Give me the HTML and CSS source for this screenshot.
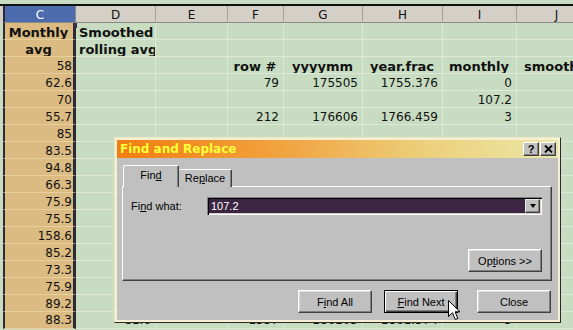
FILE: index.html
```html
<!DOCTYPE html>
<html lang="en">
<head>
<meta charset="UTF-8" />
<title>Find and Replace</title>
<link rel="stylesheet" href="styles.css">
</head>
<body>
<div class="sheet">
  <div class="top-strip"></div>

  <div class="row head">
    <span class="stub"></span><span class="c">C</span><span>D</span><span>E</span><span>F</span><span>G</span><span>H</span><span>I</span><span>J</span>
  </div>
  <div class="row">
    <span class="stub"></span><span class="c b">Monthly</span><span class="b l">Smoothed</span><span></span><span></span><span></span><span></span><span></span><span></span>
  </div>
  <div class="row">
    <span class="stub"></span><span class="c b">avg</span><span class="b l">rolling avg</span><span></span><span></span><span></span><span></span><span></span><span></span>
  </div>
  <div class="row">
    <span class="stub"></span><span class="c">58</span><span></span><span></span><span class="b">row #</span><span class="b">yyyymm</span><span class="b">year.frac</span><span class="b">monthly</span><span class="b l">smoothed</span>
  </div>
  <div class="row">
    <span class="stub"></span><span class="c">62.6</span><span></span><span></span><span>79</span><span>175505</span><span>1755.376</span><span>0</span><span></span>
  </div>
  <div class="row">
    <span class="stub"></span><span class="c">70</span><span></span><span></span><span></span><span></span><span></span><span>107.2</span><span></span>
  </div>
  <div class="row">
    <span class="stub"></span><span class="c">55.7</span><span></span><span></span><span>212</span><span>176606</span><span>1766.459</span><span>3</span><span></span>
  </div>
  <div class="row"><span class="stub"></span><span class="c">85</span><span></span><span></span><span></span><span></span><span></span><span></span><span></span></div>
  <div class="row"><span class="stub"></span><span class="c">83.5</span><span></span><span></span><span></span><span></span><span></span><span></span><span></span></div>
  <div class="row"><span class="stub"></span><span class="c">94.8</span><span></span><span></span><span></span><span></span><span></span><span></span><span></span></div>
  <div class="row"><span class="stub"></span><span class="c">66.3</span><span></span><span></span><span></span><span></span><span></span><span></span><span></span></div>
  <div class="row"><span class="stub"></span><span class="c">75.9</span><span></span><span></span><span></span><span></span><span></span><span></span><span></span></div>
  <div class="row"><span class="stub"></span><span class="c">75.5</span><span></span><span></span><span></span><span></span><span></span><span></span><span></span></div>
  <div class="row"><span class="stub"></span><span class="c">158.6</span><span></span><span></span><span></span><span></span><span></span><span></span><span></span></div>
  <div class="row"><span class="stub"></span><span class="c">85.2</span><span></span><span></span><span></span><span></span><span></span><span></span><span></span></div>
  <div class="row"><span class="stub"></span><span class="c">73.3</span><span></span><span></span><span></span><span></span><span></span><span></span><span></span></div>
  <div class="row"><span class="stub"></span><span class="c">75.9</span><span></span><span></span><span></span><span></span><span></span><span></span><span></span></div>
  <div class="row"><span class="stub"></span><span class="c">89.2</span><span></span><span></span><span></span><span></span><span></span><span></span><span></span></div>
  <div class="row low">
    <span class="stub"></span><span class="c">88.3</span><span>81.6</span><span></span><span>1357</span><span>186105</span><span>1861.374</span><span>5</span><span></span>
  </div>

  <div class="fill-handle"></div>

  <div class="dialog">
    <div class="titlebar">
      <span class="title">Find and Replace</span>
      <span class="tbtn q">?</span>
      <span class="tbtn"><svg width="9" height="8" viewBox="0 0 9 8"><path d="M1 0.5 L8 7.5 M8 0.5 L1 7.5" stroke="#000" stroke-width="1.8"/></svg></span>
    </div>

    <div class="tabs">
      <div class="tab active">Fin<u>d</u></div>
      <div class="tab">Re<u>p</u>lace</div>
    </div>

    <div class="panel">
      <div class="field">
        <label>Fi<u>n</u>d what:</label>
        <div class="combo"><span class="value">107.2</span><span class="drop"><i></i></span></div>
      </div>
      <div class="options">
        <button class="btn">Op<u>t</u>ions &gt;&gt;</button>
      </div>
    </div>

    <div class="actions">
      <button class="btn find-all">F<u>i</u>nd All</button>
      <button class="btn default"><u>F</u>ind Next</button>
      <button class="btn">Close</button>
    </div>
  </div>

  <svg class="cursor" width="13" height="21" viewBox="0 0 13 21">
    <path d="M0.5 0.5 L0.5 16.5 L4.5 12.8 L7.3 19.5 L9.8 18.4 L7.1 11.8 L12 11.8 Z" fill="#fff" stroke="#000" stroke-width="1"/>
  </svg>
</div>
</body>
</html>
```

FILE: styles.css
```css
:root {
  --green: #c7dcc1;
  --grid: #dce9d7;
  --tan: #dbbb82;
  --tan-grid: #e6cf9f;
  --sel: #2c2a36;
  --face: #c0c0c0;
  --shadow: #808080;
  --dark: #404040;
}
body {
  margin: 0;
  font-family: "DejaVu Sans", Verdana, sans-serif;
  background: var(--green);
}
.sheet {
  position: relative;
  width: 573px;
  height: 330px;
  overflow: hidden;
  background: var(--green);
}
.top-strip {
  height: 4px;
  border-bottom: 2px solid #111;
}

/* spreadsheet rows */
.row {
  display: grid;
  grid-template-columns: 3px 73px 80px 72px 56px 79px 80px 74px 80px;
  height: 17px;
  font-size: 12px;
  color: #111;
}
.row > span {
  box-sizing: border-box;
  border-right: 1px solid var(--grid);
  border-bottom: 1px solid var(--grid);
  padding: 0 4px 0 3px;
  line-height: 19px;
  white-space: nowrap;
  overflow: hidden;
  text-align: right;
}
.row.low > span {
  line-height: 17px;
}
.row > .stub {
  border: 0;
  padding: 0;
}
.row > .c {
  background: var(--tan);
  border-left: 2px solid var(--sel);
  border-right: 3px solid var(--sel);
  border-bottom-color: var(--tan-grid);
  padding: 0 1px 0 0;
}
.row > .b {
  font-weight: bold;
  font-size: 13px;
  text-align: center;
}
.row > .l {
  text-align: left;
  padding-left: 3px;
  text-overflow: clip;
}
.row > .b.l:last-child {
  padding-left: 7px;
}
.row.head > span {
  background: #d4d0c8;
  border-right: 1px solid #a4a29c;
  border-bottom: 1px solid #8c8a84;
  text-align: center;
  line-height: 18px;
  padding: 0;
}
.row.head > .stub {
  background: #d4d0c8;
  border: 0;
}
.row.head > .c {
  background: #4c6cae;
  color: #fff;
  border-left: 2px solid var(--sel);
  border-right: 1px solid #8c8a84;
}
.fill-handle {
  position: absolute;
  left: 73px;
  top: 23px;
  width: 4px;
  height: 5px;
  background: #3a2c44;
}

/* dialog */
.dialog {
  position: absolute;
  left: 114px;
  top: 137px;
  width: 447px;
  height: 186px;
  box-sizing: border-box;
  padding: 2px;
  background: var(--face);
  border: 1px solid;
  border-color: #ece6c4 #2a2a2a #2a2a2a #ece6c4;
  box-shadow: inset 0 0 0 2px #f6f0d2;
  font-family: "Liberation Sans", Arial, sans-serif;
  font-size: 11px;
  color: #000;
}
.titlebar {
  display: flex;
  align-items: center;
  height: 18px;
  padding: 0 2px 0 3px;
  background: linear-gradient(to right, #f27d10 0%, #f1a644 40%, #ecd07c 70%, #ebe7a6 100%);
}
.title {
  flex: 1;
  font-family: "DejaVu Sans", Verdana, sans-serif;
  font-weight: bold;
  font-size: 12px;
  color: #ffff3a;
}
.tbtn {
  display: flex;
  align-items: center;
  justify-content: center;
  width: 16px;
  height: 14px;
  box-sizing: border-box;
  margin-left: 1px;
  background: var(--face);
  border: 1px solid;
  border-color: #fff var(--dark) var(--dark) #fff;
  box-shadow: inset -1px -1px var(--shadow);
}
.tbtn.q {
  font-weight: bold;
  font-size: 11px;
  line-height: 12px;
}

.tabs {
  display: flex;
  align-items: flex-end;
  height: 22px;
  margin: 7px 6px -1px 5px;
  padding-left: 1px;
  position: relative;
  z-index: 1;
}
.tab {
  box-sizing: border-box;
  height: 18px;
  width: 53px;
  text-align: center;
  line-height: 17px;
  background: var(--face);
  border-top: 1px solid #fff;
  border-right: 1px solid var(--dark);
  border-radius: 2px 2px 0 0;
  box-shadow: inset -1px 0 var(--shadow);
}
.tab.active {
  width: 56px;
  height: 22px;
  line-height: 19px;
  border-left: 1px solid #fff;
}
.panel {
  display: flex;
  flex-direction: column;
  justify-content: space-between;
  box-sizing: border-box;
  height: 95px;
  margin: 0 6px 0 5px;
  padding: 10px 9px 8px 8px;
  border: 1px solid;
  border-color: #fff var(--dark) var(--dark) #fff;
  box-shadow: inset -1px -1px var(--shadow);
}
.field {
  display: flex;
  align-items: center;
}
.field label {
  width: 76px;
}
.combo {
  flex: 1;
  display: flex;
  align-items: center;
  height: 18px;
  box-sizing: border-box;
  padding: 2px;
  background: #3c2542;
  box-shadow: inset 1px 1px var(--shadow), inset 2px 2px #000, inset -1px -1px #fff, inset -2px -2px #d4d0c8;
}
.combo .value {
  flex: 1;
  color: #fff;
  padding-left: 2px;
}
.combo .drop {
  display: flex;
  align-items: center;
  justify-content: center;
  width: 15px;
  height: 14px;
  box-sizing: border-box;
  background: var(--face);
  border: 1px solid;
  border-color: #e8e8e8 var(--dark) var(--dark) #e8e8e8;
  box-shadow: inset -1px -1px var(--shadow);
}
.combo .drop i {
  border-left: 3.5px solid transparent;
  border-right: 3.5px solid transparent;
  border-top: 4px solid #000;
}
.options {
  display: flex;
  justify-content: flex-end;
}
.btn {
  width: 74px;
  height: 23px;
  padding: 0;
  font: inherit;
  color: #000;
  background: var(--face);
  border: 1px solid;
  border-color: #fff var(--dark) var(--dark) #fff;
  box-shadow: inset -1px -1px var(--shadow), inset 1px 1px #dcdcdc;
}
.btn.default {
  border-color: #000;
  margin-right: 19px;
  box-shadow: inset 1px 1px #fff, inset -1px -1px var(--dark), inset -2px -2px var(--shadow);
}
.btn.find-all {
  margin-right: 12px;
}
.actions {
  display: flex;
  justify-content: flex-end;
  margin-top: 9px;
  padding-right: 7px;
}
.cursor {
  position: absolute;
  left: 448px;
  top: 300px;
}
```
